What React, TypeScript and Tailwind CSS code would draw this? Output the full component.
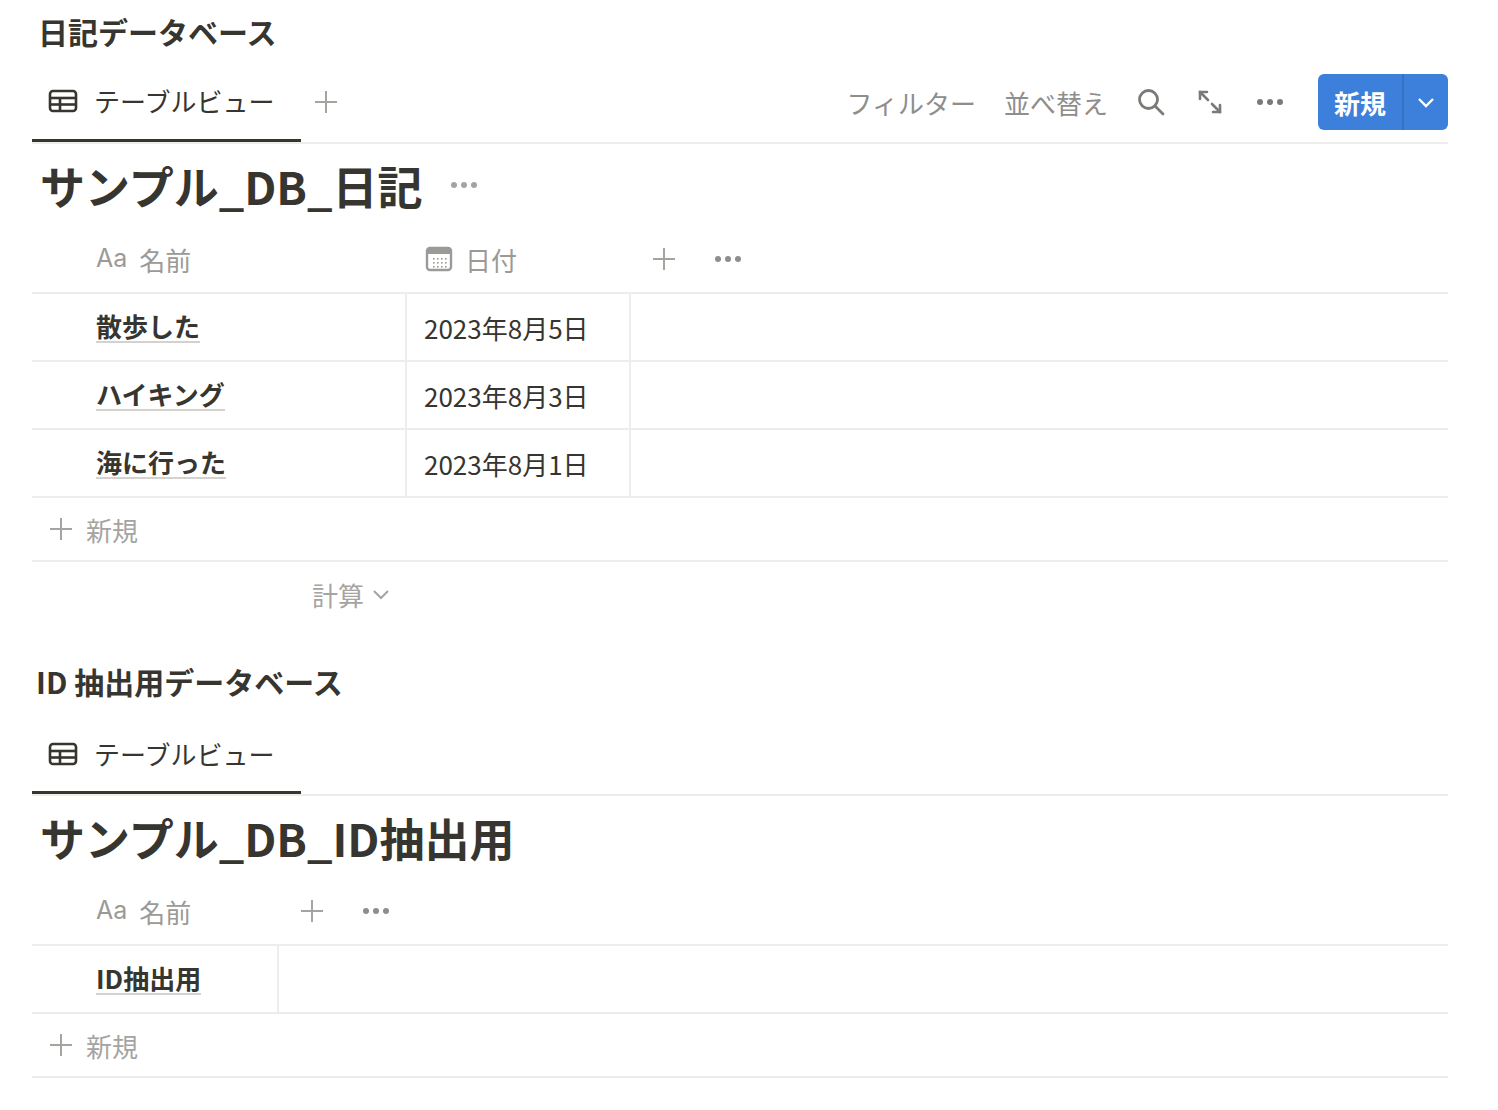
import React from "react";

const font = { fontFamily: '"Noto Sans CJK JP", "Noto Sans", sans-serif' };

function TableIcon() {
  return (
    <svg width="30" height="26" viewBox="0 0 30 26" fill="none" stroke="#37352f" strokeWidth="2.6">
      <rect x="2" y="3" width="26" height="20" rx="3" />
      <line x1="2" y1="10" x2="28" y2="10" />
      <line x1="2" y1="16.5" x2="28" y2="16.5" />
      <line x1="12" y1="10" x2="12" y2="23" />
    </svg>
  );
}
function Plus({ c = "#a5a4a1", s = 26 }: { c?: string; s?: number }) {
  return (
    <svg width={s} height={s} viewBox="0 0 26 26" stroke={c} strokeWidth="2">
      <line x1="13" y1="2" x2="13" y2="24" />
      <line x1="2" y1="13" x2="24" y2="13" />
    </svg>
  );
}
function Dots({ c = "#8f8e8b" }: { c?: string }) {
  return (
    <svg width="28" height="8" viewBox="0 0 28 8" fill={c}>
      <circle cx="4" cy="4" r="3" />
      <circle cx="14" cy="4" r="3" />
      <circle cx="24" cy="4" r="3" />
    </svg>
  );
}
function CalIcon() {
  return (
    <svg width="28" height="26" viewBox="0 0 28 26" fill="none">
      <rect x="2" y="2" width="24" height="22" rx="3" stroke="#9b9a97" strokeWidth="2.4" />
      <rect x="2" y="2" width="24" height="6" fill="#9b9a97" />
      {[8, 12, 16, 20].map((x) => [12, 16, 20].map((y) => <rect key={x + "-" + y} x={x} y={y} width="1.6" height="1.6" fill="#9b9a97" />))}
    </svg>
  );
}

function NameHeader() {
  return (
    <div className="flex items-center gap-3 text-[26px] text-[#9b9a97]">
      <span style={{ fontFamily: '"Inter", sans-serif' }} className="text-[25px]">Aa</span>
      <span>名前</span>
    </div>
  );
}

function Tab() {
  return (
    <div className="w-[269px] h-full flex items-center gap-4 px-4 border-b-[3px] border-[#37352f] -mb-[2px] text-[26px] text-[#37352f]">
      <TableIcon />
      <span>テーブルビュー</span>
    </div>
  );
}

function NewRow() {
  return (
    <div className="h-[64px] border-b-2 border-[#ededeb] flex items-center gap-3 pl-4 text-[26px] text-[#a5a4a1]">
      <Plus />
      <span>新規</span>
    </div>
  );
}

function Row({ name, date }: { name: string; date?: string }) {
  return (
    <div className="h-[68px] border-b-2 border-[#ededeb] flex text-[26px] text-[#37352f]">
      <div className={(date ? "w-[375px]" : "w-[247px]") + " border-r-2 border-[#ededeb] flex items-center pl-16"}>
        <span className="font-bold border-b-2 border-[#d3d2cf] leading-[30px]">{name}</span>
      </div>
      {date && <div className="w-[224px] border-r-2 border-[#ededeb] flex items-center pl-[17px]" style={{ fontFamily: '"Noto Sans CJK JP", sans-serif' }}>{date}</div>}
    </div>
  );
}

export default function App() {
  return (
    <div className="w-[1498px] h-[1110px] bg-white pl-8 pr-[50px] text-[#37352f]" style={font}>
      <div className="h-[62px] flex items-end pl-[6px] text-[30px] font-bold leading-none pb-[16px]">日記データベース</div>
      <div className="h-[82px] flex items-stretch border-b-2 border-[#ededeb]">
        <Tab />
        <div className="flex items-center ml-3"><Plus /></div>
        <div className="flex-1" />
        <div className="flex items-center gap-0 text-[26px] text-[#8f8e8b]">
          <span className="mr-7">フィルター</span>
          <span className="mr-7">並べ替え</span>
          <svg width="30" height="30" viewBox="0 0 30 30" fill="none" stroke="#7b7a76" strokeWidth="2.8" className="mr-[30px]">
            <circle cx="12.5" cy="12.5" r="9" />
            <line x1="19" y1="19" x2="27" y2="27" strokeLinecap="round" />
          </svg>
          <svg width="28" height="28" viewBox="0 0 28 28" fill="none" stroke="#7b7a76" strokeWidth="2.6" strokeLinecap="round" className="mr-[32px]">
            <line x1="4" y1="4" x2="12" y2="12" />
            <polyline points="4,11 4,4 11,4" />
            <line x1="16" y1="16" x2="24" y2="24" />
            <polyline points="17,24 24,24 24,17" />
          </svg>
          <span className="mr-[34px]"><Dots c="#7b7a76" /></span>
          <div className="h-[56px] flex rounded-md bg-[#3d80db] text-white">
            <div className="px-4 flex items-center font-bold text-[26px]">新規</div>
            <div className="w-[46px] border-l-2 border-[#3572c4] flex items-center justify-center">
              <svg width="18" height="12" viewBox="0 0 18 12" fill="none" stroke="white" strokeWidth="2.4"><polyline points="2,3 9,10 16,3" /></svg>
            </div>
          </div>
        </div>
      </div>
      <div className="h-[82px] flex items-center gap-7 pl-2">
        <span className="text-[45px] font-bold leading-none">サンプル_DB_日記</span>
        <Dots c="#a5a4a1" />
      </div>
      <div className="h-[68px] border-b-2 border-[#ededeb] flex items-center">
        <div className="w-[375px] pl-16"><NameHeader /></div>
        <div className="w-[224px] pl-[18px] flex items-center gap-3 text-[26px] text-[#9b9a97]"><CalIcon /><span>日付</span></div>
        <div className="ml-5"><Plus /></div>
        <div className="ml-[37px]"><Dots /></div>
      </div>
      <Row name="散歩した" date="2023年8月5日" />
      <Row name="ハイキング" date="2023年8月3日" />
      <Row name="海に行った" date="2023年8月1日" />
      <NewRow />
      <div className="h-[64px] flex items-center pl-[280px] gap-2 text-[26px] text-[#a5a4a1]">
        <span>計算</span>
        <svg width="18" height="12" viewBox="0 0 18 12" fill="none" stroke="#a5a4a1" strokeWidth="2"><polyline points="2,3 9,10 16,3" /></svg>
      </div>

      <div className="h-[90px] flex items-end pl-[4px] text-[30px] font-bold leading-none pb-[20px]">ID 抽出用データベース</div>
      <div className="h-[80px] flex items-stretch border-b-2 border-[#ededeb]">
        <Tab />
      </div>
      <div className="h-[82px] flex items-center pl-2">
        <span className="text-[45px] font-bold leading-none">サンプル_DB_ID抽出用</span>
      </div>
      <div className="h-[68px] border-b-2 border-[#ededeb] flex items-center">
        <div className="w-[247px] pl-16"><NameHeader /></div>
        <div className="ml-5"><Plus /></div>
        <div className="ml-[37px]"><Dots /></div>
      </div>
      <Row name="ID抽出用" />
      <NewRow />
    </div>
  );
}
